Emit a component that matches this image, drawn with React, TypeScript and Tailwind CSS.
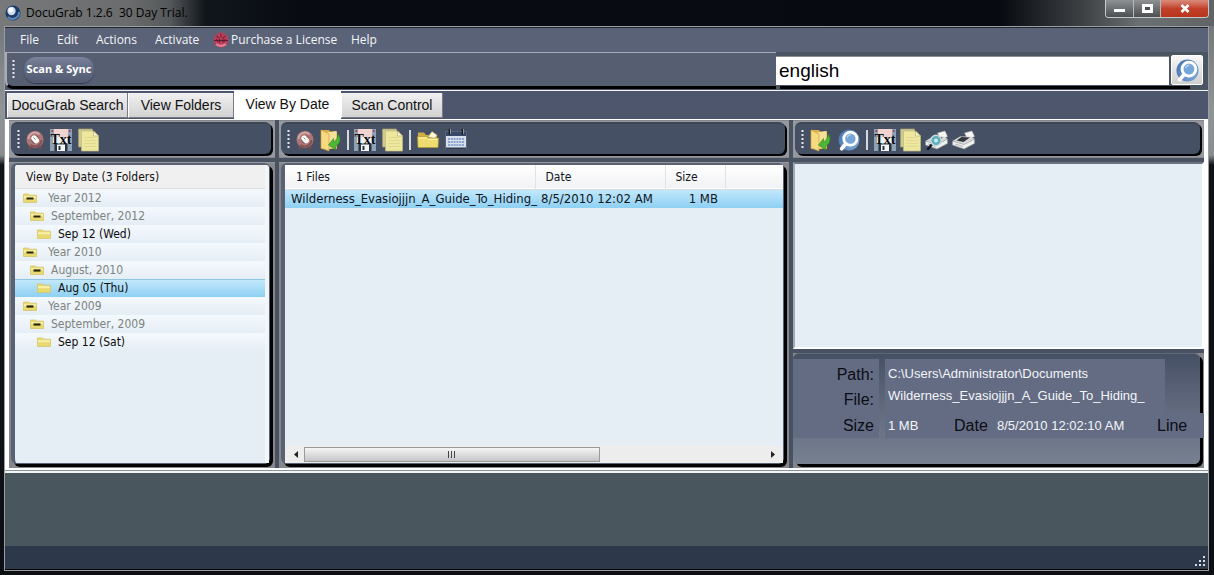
import { useState } from "react";
import type { ReactNode } from "react";

type TreeRow = { level: 0 | 1 | 2, label: string };

const treeRows: TreeRow[] = [
	{ level: 0, label: 'Year 2012' },
	{ level: 1, label: 'September, 2012' },
	{ level: 2, label: 'Sep 12 (Wed)' },
	{ level: 0, label: 'Year 2010' },
	{ level: 1, label: 'August, 2010' },
	{ level: 2, label: 'Aug 05 (Thu)' },
	{ level: 0, label: 'Year 2009' },
	{ level: 1, label: 'September, 2009' },
	{ level: 2, label: 'Sep 12 (Sat)' },
];

const tabs = [
	{ label: 'DocuGrab Search', width: 'w-[121px]' },
	{ label: 'View Folders', width: 'w-[106px]' },
	{ label: 'View By Date', width: 'w-[107px]' },
	{ label: 'Scan Control', width: 'w-[102px]' },
];

/* ---------- icons ---------- */

function LensIcon({ size }: { size: number }) {
	return (
		<svg width={size} height={size} viewBox="0 0 24 24" aria-hidden="true">
			<defs>
				<radialGradient id="lens" cx="65%" cy="60%" r="70%">
					<stop offset="0" stopColor="#8fb9e4" />
					<stop offset="1" stopColor="#4674b0" />
				</radialGradient>
			</defs>
			<circle cx="12" cy="12" r="11.5" fill="url(#lens)" />
			<path d="M9 15.500 4 21.500" stroke="#fff" strokeWidth="4" strokeLinecap="round" />
			<circle cx="13.500" cy="10.500" r="7.200" fill="#78a5d8" stroke="#fff" strokeWidth="3" />
			<path d="M10 9.500a4 4 0 0 1 4-3" stroke="#b5d3f1" strokeWidth="1.400" fill="none" />
		</svg>
	);
}

function AppIcon() {
	return (
		<svg width="16" height="16" viewBox="0 0 16 16" aria-hidden="true">
			<circle cx="8" cy="8" r="7.5" fill="#1c3a63" />
			<path d="M3 12a6.5 6.5 0 0 0 11-5" stroke="#5b88bd" strokeWidth="2" fill="none" />
			<circle cx="6.5" cy="6" r="4.2" fill="#c8dbf0" />
			<circle cx="5.8" cy="5.2" r="2.4" fill="#fff" />
		</svg>
	);
}

function LicenseIcon() {
	return (
		<svg width="16" height="16" viewBox="0 0 16 16" aria-hidden="true">
			<circle cx="8" cy="8" r="7.5" fill="#b8405a" />
			<path d="M8 1.5v4M3.5 4l2.5 2M12.5 4 10 6" stroke="#7c2338" strokeWidth="1.2" />
			<path d="M1 8.500h14M3.500 7l1.500 3M6.500 6.500v4M10 6.500v4M12.500 7 11 10" stroke="#5e1a2c" strokeWidth="1" />
			<path d="M3 12.200c3 2 7 2 10 0" stroke="#e87d92" strokeWidth="2" fill="none" />
		</svg>
	);
}

function RescanIcon() {
	return (
		<svg width="20" height="20" viewBox="0 0 20 20" aria-hidden="true">
			<path d="M4 16 3 19h4zM16 16l1 3h-4z" fill="#7c4a4a" />
			<circle cx="10" cy="9.5" r="8.5" fill="#ad7676" />
			<path d="M3.5 9a6.5 6.5 0 0 1 11-4.5" stroke="#d3a5a2" strokeWidth="2" fill="none" />
			<path d="M16.4 10a6.5 6.5 0 0 1-11 4.7" stroke="#87504f" strokeWidth="2" fill="none" />
			<circle cx="10" cy="9.5" r="4.2" fill="#8b6063" />
			<rect x="7.4" y="5.2" width="5.6" height="8.600" rx="2.6" fill="#fbfbf9" transform="rotate(-42 10 9.5)" />
			<path d="M8.500 7.500l2 2" stroke="#8b8b8b" strokeWidth="1" />
		</svg>
	);
}

function TxtIcon() {
	return (
		<svg width="22" height="22" viewBox="0 0 22 22" aria-hidden="true">
			<rect width="22" height="22" fill="#8ea3b8" />
			<rect x="4" y="0" width="14" height="9" fill="#f1d3d0" />
			<path d="M1.500 2h1.500M19 2h1.500" stroke="#b03838" strokeWidth="2" />
			<path d="M3 8h16v6H3z" fill="#eef1f4" />
			<rect x="4.500" y="15" width="13" height="7" fill="#29333f" />
			<rect x="7" y="15.500" width="8" height="6.500" fill="#f4f6f7" />
			<rect x="8.500" y="17" width="2" height="4" fill="#29333f" />
			<text x="11" y="14.500" textAnchor="middle" fontFamily="Liberation Serif, serif" fontWeight="700" fontSize="14" fill="#0a0a0a">Txt</text>
		</svg>
	);
}

function CopyIcon() {
	return (
		<svg width="21" height="24" viewBox="0 0 21 24" aria-hidden="true">
			<path d="M.5 1h14v18H.5z" fill="#cfca92" stroke="#a39e71" strokeWidth=".7" />
			<path d="M3.500 3h12l5 5v15h-17z" fill="#eee89f" stroke="#c2ba7c" strokeWidth=".7" />
			<path d="M15.500 3v5h5z" fill="#fbf8d4" stroke="#b6ae6e" strokeWidth=".7" />
			<path d="M6 9.500h11M6 12.500h12M6 15.500h12M6 18.500h12" stroke="#e0d892" />
		</svg>
	);
}

function ImportFolderIcon() {
	return (
		<svg width="22" height="24" viewBox="0 0 22 24" aria-hidden="true">
			<path d="M1 2h8l1 1.500h7V21H1z" fill="#dfb04a" />
			<path d="M7 4.500 16.500 3v15L7 22z" fill="#f6e09a" />
			<path d="M1 2l8 4v17l-8-3z" fill="#f6da80" stroke="#d0a542" strokeWidth=".7" />
			<path d="M18 6c3 4 3 9-2.500 12.500V22L8.500 17l5-6.500v3.500c3-2 4.500-4.500 4.500-8z" fill="#4db635" stroke="#2b8a22" strokeWidth=".6" />
		</svg>
	);
}

function FolderIcon() {
	return (
		<svg width="22" height="20" viewBox="0 0 22 20" aria-hidden="true">
			<path d="M1 2.500h6l2 2.500h3l3-3 5 3v12H1z" fill="#cfae43" />
			<path d="M11 7l4-5.500 5 3.500-2 4z" fill="#fbf6dc" stroke="#a99755" strokeWidth=".6" />
			<path d="M.5 6.500h9l1.500 1.500h10.500L21 17.500H1z" fill="#efdc70" stroke="#b7982d" strokeWidth=".7" />
			<path d="M2 8h8M11 9.500h9" stroke="#fff6b8" />
		</svg>
	);
}

function CalendarIcon() {
	return (
		<svg width="22" height="21" viewBox="0 0 22 21" aria-hidden="true">
			<rect x=".5" y="2.500" width="21" height="18" fill="#d7e0ec" stroke="#5a6678" />
			<path d="M1 3h20v4H1z" fill="#38486a" />
			<path d="M4.500 0v5.500M17.500 0v5.500" stroke="#15191f" strokeWidth="1.600" />
			<path d="M5.500 0v5M18.500 0v5" stroke="#cdd4de" strokeWidth=".6" />
			<path d="M3 10h16M3 13h16M3 16h16" stroke="#8ba3cd" strokeWidth="2" strokeDasharray="2 .8" />
			<path d="M1 19.500h20" stroke="#343d4d" strokeWidth="2" />
		</svg>
	);
}

function PrinterIcon({ preview = false }: { preview?: boolean }) {
	return (
		<svg width="23" height="20" viewBox="0 0 23 20" aria-hidden="true">
			<path d="M12.500 3 20 1l2.500 5.500L16 9.500z" fill="#f5f5f3" stroke="#b5b5b5" strokeWidth=".5" />
			<path d="M.5 11 8 6.500h11L22.500 9 12 15.500z" fill="#d9d9d8" />
			<path d="M4.500 10.500 9.500 7l8.500.5L11.500 12z" fill="#33373c" />
			<path d="M.5 11 12 14.500 22.500 9v4.500L12 19 .5 15z" fill="#efefed" stroke="#8f9296" strokeWidth=".6" />
			<path d="M3 14l8 2.500" stroke="#b0b3b6" />
			{preview && (
				<>
					<path d="M8 13 3 19" stroke="#111820" strokeWidth="2.600" strokeLinecap="round" />
					<circle cx="11" cy="10.500" r="5.200" fill="#62aebc" stroke="#c9dcdf" strokeWidth="1.400" />
					<circle cx="11" cy="10.500" r="2" fill="#c6ecf0" />
				</>
			)}
		</svg>
	);
}

function TreeFolderIcon({ open }: { open: boolean }) {
	return (
		<svg width="14" height="10" viewBox="0 0 14 10" aria-hidden="true">
			<path d="M.5 1h5l1 1.200H13.500V9.500H.5z" fill="#e8d970" stroke="#d3c260" strokeWidth=".7" />
			<path d="M1 3.200h12v2H1z" fill="#f8f0a8" />
			{open && <path d="M3.500 5.500h7" stroke="#2b2508" strokeWidth="2.200" />}
		</svg>
	);
}

/* ---------- shared pieces ---------- */

function Grip() {
	return (
		<svg width="4" height="20" viewBox="0 0 4 20" className="shrink-0" aria-hidden="true">
			<path d="M1.500 0v20" stroke="#e6e8ec" strokeWidth="2" strokeDasharray="2 2" />
		</svg>
	);
}

function Separator() {
	return <span className="h-[20px] w-[2px] shrink-0 bg-[#d5d8dc]" />;
}

function IconButton({ label, children }: { label: string, children: ReactNode }) {
	return <button type="button" aria-label={label} className="shrink-0">{children}</button>;
}

function Toolbar({ children }: { children: ReactNode }) {
	return (
		<div className="h-[38px] shrink-0 border-y border-[#84878f] bg-[#96989e] pt-px pr-1 pb-[3px] pl-[2px]">
			<div className="flex h-full items-center rounded-md border-t-2 border-[#3d4654] bg-[#465064] pt-px pl-[6px] shadow-[2px_2px_0_#020305]">
				{children}
			</div>
		</div>
	);
}

function Panel({ children }: { children: ReactNode }) {
	return (
		<div className="flex min-h-0 flex-1 flex-col border-t border-[#96989e] bg-[#85878d] pr-[5px] pb-1 pl-[2px]">
			<div className="flex min-h-0 flex-1 flex-col rounded-md border-t-2 border-r border-b border-l-4 border-[#596272] bg-[#e5edf5] shadow-[3px_3px_0_#020305]">
				{children}
			</div>
		</div>
	);
}

function TitleBar() {
	return (
		<header className="flex h-[26px] shrink-0 items-start justify-between bg-[linear-gradient(90deg,#77797a_0,#696b6c_130px,#55585a_170px,#11161c_205px,#080c12_300px,#070b11_1000px,#3b3f42_1080px,#6b7072_1140px,#606466_100%)] pr-[5px] pl-[5px]">
			<div className="flex h-full items-center gap-[5px]">
				<AppIcon />
				<h1 className="text-[12px] whitespace-pre text-black">DocuGrab 1.2.6  30 Day Trial.</h1>
			</div>
			<div className="flex h-[18px] overflow-hidden rounded-b-[4px] border border-t-0 border-[#c6c9cb]">
				<button type="button" aria-label="Minimize" className="flex w-[28px] items-end justify-center border-r border-[#b5b8ba] bg-linear-to-b from-[#8f9294] to-[#4c5053] pb-[5px]">
					<span className="h-[3px] w-[11px] bg-white" />
				</button>
				<button type="button" aria-label="Maximize" className="flex w-[27px] items-center justify-center border-r border-[#b5b8ba] bg-linear-to-b from-[#8f9294] to-[#4c5053]">
					<span className="h-[9px] w-[11px] border-[3px] border-white bg-[#4c5053]" />
				</button>
				<button type="button" aria-label="Close" className="flex w-[47px] items-center justify-center bg-linear-to-b from-[#d98b7c] via-[#c2402a] to-[#b8341c]">
					<svg width="10" height="9" viewBox="0 0 10 9" aria-hidden="true">
						<path d="M1.500 1 8.500 8M8.500 1 1.500 8" stroke="#fff" strokeWidth="2.600" />
					</svg>
				</button>
			</div>
		</header>
	);
}

function MenuBar() {
	return (
		<nav className="flex h-[25px] shrink-0 items-center border-t border-[#22262d] bg-[#5a6277] pl-[15px] text-[12px] text-[#f4f5f7]">
			<button type="button" className="w-[37px] text-left">File</button>
			<button type="button" className="w-[39px] text-left">Edit</button>
			<button type="button" className="w-[59px] text-left">Actions</button>
			<button type="button" className="w-[58px] text-left">Activate</button>
			<button type="button" className="flex w-[138px] items-center gap-[2px] whitespace-nowrap">
				<LicenseIcon />
				Purchase a License
			</button>
			<button type="button">Help</button>
		</nav>
	);
}

function SearchBar() {
	const [query, setQuery] = useState<string>('english');

	return (
		<div className="flex h-[39px] shrink-0 border-b border-[#f3f4f6] bg-[#4d566d]">
			<div className="flex flex-1 flex-col pb-[1px]">
				<div className="flex flex-1 items-center gap-[8px] rounded-bl-lg border-t border-b-[3px] border-l-2 border-t-[#a8acb8] border-b-black border-l-[#a8acb8] bg-[#565e72] pl-[5px]">
					<Grip />
					<button type="button" className="h-[26px] w-[70px] rounded-xl bg-linear-to-b from-[#7a829c] via-[#616980] to-[#535b72] text-[11px] font-bold whitespace-nowrap text-white shadow-[0_1px_1px_#333a4b]">
						Scan &amp; Sync
					</button>
				</div>
			</div>
			<form className="flex w-[432px] flex-col bg-[#4b5561]" onSubmit={(e) => e.preventDefault()}>
				<div className="flex flex-1 items-center gap-[2px] pt-[2px]">
					<input
						type="text"
						aria-label="Search text"
						value={query}
						onChange={(e) => setQuery(e.target.value)}
						className="h-[29px] min-w-0 flex-1 border-t border-[#8b9095] bg-white px-[3px] font-['Liberation_Sans',Arial,sans-serif] text-[19px] text-black outline-none"
					/>
					<button type="submit" aria-label="Search" className="mr-[5px] flex h-[30px] w-[32px] items-center justify-center rounded-[2px] border border-white bg-linear-to-b from-[#f7f7f7] to-[#cfcfcf]">
						<LensIcon size={23} />
					</button>
				</div>
				<div className="mr-[18px] mb-[1px] ml-1 h-[3px] bg-black" />
			</form>
		</div>
	);
}

function DateTree() {
	const [selected, setSelected] = useState<string>('Aug 05 (Thu)');

	const indent = ['pl-[3px] gap-[11px]', 'pl-[10px] gap-[7px]', 'pl-[17px] gap-[7px]'];

	return (
		<section className="flex w-[266px] shrink-0 flex-col gap-1">
			<Toolbar>
				<Grip />
				<div className="ml-[4px] flex items-center gap-[5px]">
					<IconButton label="Rescan"><RescanIcon /></IconButton>
					<IconButton label="Save as text"><TxtIcon /></IconButton>
				</div>
				<div className="ml-[6px] flex"><IconButton label="Copy"><CopyIcon /></IconButton></div>
			</Toolbar>
			<Panel>
				<div className="flex-1 overflow-hidden rounded-t-[3px] border-r-4 border-[#f2f5f9] font-['DejaVu_Sans_Condensed','DejaVu_Sans',Tahoma,sans-serif] text-[12px]">
					<h2 className="h-[24px] border-b border-[#dcdde0] bg-[#f1f0f1] pl-[11px] leading-[24px] text-[#111]">View By Date (3 Folders)</h2>
					<ul>
						{treeRows.map((row) => {
							const active = row.label === selected;
							return (
								<li key={row.label}>
									<button
										type="button"
										onClick={() => setSelected(row.label)}
										className={`flex h-[18px] w-full items-center text-left ${indent[row.level]} ${active
											? 'bg-linear-to-b from-[#c4e9fb] to-[#8ed0f3] shadow-[inset_0_1px_0_#8fc4e2]'
											: 'bg-linear-to-b from-[#f4f9fd] to-[#e5edf5]'
										} ${row.level === 2 ? 'text-[#0d0d0d]' : 'text-[#7c8480]'}`}
									>
										<span className="ml-[5px]"><TreeFolderIcon open={row.level < 2} /></span>
										{row.label}
									</button>
								</li>
							);
						})}
					</ul>
				</div>
			</Panel>
		</section>
	);
}

function FileList() {
	return (
		<section className="flex min-w-0 flex-1 flex-col gap-1">
			<Toolbar>
				<Grip />
				<div className="ml-[4px] flex items-center gap-[5px]">
					<IconButton label="Rescan"><RescanIcon /></IconButton>
					<IconButton label="Import"><ImportFolderIcon /></IconButton>
					<Separator />
					<IconButton label="Save as text"><TxtIcon /></IconButton>
				</div>
				<div className="ml-[6px] flex items-center gap-[6px]">
					<IconButton label="Copy"><CopyIcon /></IconButton>
					<Separator />
					<IconButton label="Open folder"><FolderIcon /></IconButton>
					<IconButton label="Calendar"><CalendarIcon /></IconButton>
				</div>
			</Toolbar>
			<Panel>
				<div className="min-h-0 flex-1 overflow-hidden">
					<table className="w-full table-fixed border-collapse font-['DejaVu_Sans_Condensed','DejaVu_Sans',Tahoma,sans-serif] text-[12px] whitespace-nowrap text-[#10141c]">
						<thead>
							<tr className="h-[24px] border-b border-[#d5dbe1] bg-linear-to-b from-white to-[#f1f2f4] text-left">
								<th scope="col" className="w-[250px] border-r border-[#e0e3e7] pl-[11px] font-normal">1 Files</th>
								<th scope="col" className="w-[130px] border-r border-[#e0e3e7] pl-[10px] font-normal">Date</th>
								<th scope="col" className="w-[60px] border-r border-[#e0e3e7] pl-[10px] font-normal">Size</th>
								<td></td>
							</tr>
						</thead>
						<tbody>
							<tr className="h-[19px] bg-linear-to-b from-[#c4e9fb] to-[#8ed0f3] text-[13px] leading-[18px]">
								<td className="pl-[6px]">Wilderness_Evasiojjjn_A_Guide_To_Hiding_</td>
								<td className="pl-[6px]">8/5/2010 12:02 AM</td>
								<td className="pr-[7px] text-right">1 MB</td>
								<td></td>
							</tr>
						</tbody>
					</table>
				</div>
				<div className="flex h-[18px] shrink-0 items-center justify-between bg-[#ededee] px-[2px]">
					<div className="flex flex-1 items-center">
						<button type="button" aria-label="Scroll left" className="flex w-[17px] justify-center">
							<svg width="4" height="7" viewBox="0 0 4 7" aria-hidden="true"><path d="M4 0v7L0 3.500z" fill="#222" /></svg>
						</button>
						<div className="flex h-[15px] w-[62%] items-center justify-center gap-[2px] border border-[#999] bg-linear-to-b from-[#f5f5f5] to-[#c4c5c7]">
							<span className="h-[7px] w-px bg-[#444]" />
							<span className="h-[7px] w-px bg-[#444]" />
							<span className="h-[7px] w-px bg-[#444]" />
						</div>
					</div>
					<button type="button" aria-label="Scroll right" className="flex w-[17px] justify-center">
						<svg width="4" height="7" viewBox="0 0 4 7" aria-hidden="true"><path d="M0 0v7l4-3.500z" fill="#222" /></svg>
					</button>
				</div>
			</Panel>
		</section>
	);
}

function PreviewPane() {
	return (
		<section className="flex w-[411px] shrink-0 flex-col gap-1 font-['Liberation_Sans',Arial,sans-serif]">
			<Toolbar>
				<Grip />
				<div className="ml-[5px] flex items-center gap-[6px]">
					<IconButton label="Import"><ImportFolderIcon /></IconButton>
					<IconButton label="Find"><LensIcon size={22} /></IconButton>
					<Separator />
					<IconButton label="Save as text"><TxtIcon /></IconButton>
				</div>
				<div className="ml-[4px] flex items-center gap-[4px]">
					<IconButton label="Copy"><CopyIcon /></IconButton>
					<IconButton label="Print preview"><PrinterIcon preview /></IconButton>
					<IconButton label="Print"><PrinterIcon /></IconButton>
				</div>
			</Toolbar>
			<div className="min-h-0 flex-1 border-2 border-t-[#6b7480] border-r-white border-b-white border-l-[#a3a9b0] bg-[#e5edf5]" />
			<div className="h-[115px] shrink-0 bg-[#85878d] pr-1 pb-1">
				<div className="flex h-full flex-col rounded-md border-t border-[#5e6875] bg-linear-to-b from-[#465064] via-[#626b7e] to-[#778192] pt-[5px] shadow-[3px_3px_0_#020305]">
					<dl className="grid grid-cols-[86px_1fr] gap-x-[6px] text-[13px] leading-[22px] text-[#f3f5f9]">
						<dt className="row-span-2 bg-[#646c83] pt-[3px] pr-[5px] text-right text-[16px] leading-[25px] text-[#0b0d13]">
							<span className="block">Path:</span>
							<span className="block">File:</span>
						</dt>
						<dd className="mr-[35px] bg-[#646c83] pt-[4px] pl-[3px]">C:\Users\Administrator\Documents</dd>
						<dd className="mr-[35px] bg-[#646c83] pb-[6px] pl-[3px] whitespace-nowrap">Wilderness_Evasiojjjn_A_Guide_To_Hiding_</dd>
						<dt className="bg-[#646c83] pr-[5px] text-right text-[16px] leading-[25px] text-[#0b0d13]">Size</dt>
						<dd className="-mr-1 flex items-center bg-[#646c83] pl-[3px] leading-[25px] whitespace-nowrap">
							<span className="w-[66px]">1 MB</span>
							<span className="w-[43px] text-[16px] text-[#0b0d13]">Date</span>
							<span className="w-[160px]">8/5/2010 12:02:10 AM</span>
							<span className="text-[16px] text-[#0b0d13]">Line</span>
						</dd>
					</dl>
				</div>
			</div>
		</section>
	);
}

export default function App() {
	const [activeTab, setActiveTab] = useState<string>('View By Date');

	return (
		<div className="flex h-screen w-full flex-col overflow-hidden bg-[linear-gradient(180deg,#6d7072_0,#909496_110px,#8a8d90_155px,#0f1318_165px,#0c1015_100%)] font-['Open_Sans','Noto_Sans','Segoe_UI',sans-serif]">
			<TitleBar />
			<div className="mr-[5px] mb-[4px] ml-[4px] flex min-h-0 flex-1 flex-col border border-[#9a9ea3] bg-[#4d566d]">
				<MenuBar />
				<SearchBar />
				<div role="tablist" className="flex h-[28px] shrink-0 items-end pl-[2px] font-['Liberation_Sans',Arial,sans-serif] text-[14px]">
					{tabs.map((tab) => {
						const active = tab.label === activeTab;
						return (
							<button
								key={tab.label}
								type="button"
								role="tab"
								aria-selected={active}
								onClick={() => setActiveTab(tab.label)}
								className={`${tab.width} shrink-0 whitespace-nowrap text-[#111] ${active
									? 'h-[28px] bg-white pb-[2px]'
									: 'mb-[1px] h-[25px] border-r border-b border-r-[#777c86] border-b-[#777c86] border-l border-l-white bg-linear-to-b from-[#f1f1f1] to-[#d2d2d2]'
								}`}
							>
								{tab.label}
							</button>
						);
					})}
				</div>
				<main className="flex min-h-0 flex-1 flex-col border-b-2 border-[#f3f5f5] bg-[#89939a] pb-px">
					<div className="flex min-h-0 flex-1 gap-1 border-t border-r-4 border-b-2 border-l-4 border-white bg-[#485260]">
						<DateTree />
						<FileList />
						<PreviewPane />
					</div>
				</main>
				<div className="h-[73px] shrink-0 bg-[#49565e]" />
				<footer className="flex h-[24px] shrink-0 items-end justify-end border-b border-black bg-[#2d394b] pr-[2px] pb-[2px]">
					<svg width="12" height="12" viewBox="0 0 12 12" aria-hidden="true">
						<path d="M9 1h2v2H9zM9 5h2v2H9zM5 5h2v2H5zM9 9h2v2H9zM5 9h2v2H5zM1 9h2v2H1z" fill="#d9dde2" />
					</svg>
				</footer>
			</div>
		</div>
	);
}
